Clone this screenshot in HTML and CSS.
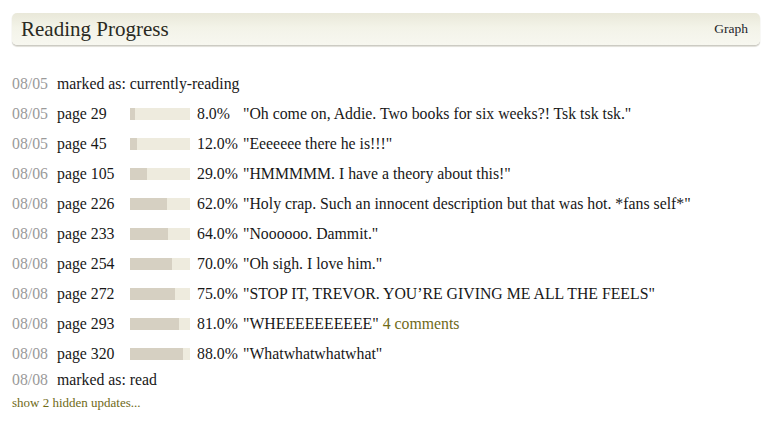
FILE: index.html
```html
<!DOCTYPE html>
<html>
<head>
<meta charset="utf-8">
<link rel="stylesheet" href="styles.css">
</head>
<body>
<div class="page">
  <div class="header">
    <h2 class="title">Reading Progress</h2>
    <a class="graph" href="#">Graph</a>
  </div>
  <div class="list">
    <div class="row status status-start"><span class="date">08/05</span><span class="label">marked as: currently-reading</span></div>
    <div class="row"><span class="date">08/05</span><span class="page-no">page 29</span><span class="bar"><span class="fill" style="width:8%"></span></span><span class="pct">8.0%</span><span class="quote">"Oh come on, Addie. Two books for six weeks?! Tsk tsk tsk."</span></div>
    <div class="row"><span class="date">08/05</span><span class="page-no">page 45</span><span class="bar"><span class="fill" style="width:12%"></span></span><span class="pct">12.0%</span><span class="quote">"Eeeeeee there he is!!!"</span></div>
    <div class="row"><span class="date">08/06</span><span class="page-no">page 105</span><span class="bar"><span class="fill" style="width:29%"></span></span><span class="pct">29.0%</span><span class="quote">"HMMMMM. I have a theory about this!"</span></div>
    <div class="row"><span class="date">08/08</span><span class="page-no">page 226</span><span class="bar"><span class="fill" style="width:62%"></span></span><span class="pct">62.0%</span><span class="quote">"Holy crap. Such an innocent description but that was hot. *fans self*"</span></div>
    <div class="row"><span class="date">08/08</span><span class="page-no">page 233</span><span class="bar"><span class="fill" style="width:64%"></span></span><span class="pct">64.0%</span><span class="quote">"Noooooo. Dammit."</span></div>
    <div class="row"><span class="date">08/08</span><span class="page-no">page 254</span><span class="bar"><span class="fill" style="width:70%"></span></span><span class="pct">70.0%</span><span class="quote">"Oh sigh. I love him."</span></div>
    <div class="row"><span class="date">08/08</span><span class="page-no">page 272</span><span class="bar"><span class="fill" style="width:75%"></span></span><span class="pct">75.0%</span><span class="quote">"STOP IT, TREVOR. YOU’RE GIVING ME ALL THE FEELS"</span></div>
    <div class="row"><span class="date">08/08</span><span class="page-no">page 293</span><span class="bar"><span class="fill" style="width:81%"></span></span><span class="pct">81.0%</span><span class="quote">"WHEEEEEEEEEE" <a class="link" href="#">4 comments</a></span></div>
    <div class="row"><span class="date">08/08</span><span class="page-no">page 320</span><span class="bar"><span class="fill" style="width:88%"></span></span><span class="pct">88.0%</span><span class="quote">"Whatwhatwhatwhat"</span></div>
    <div class="row status status-end"><span class="date">08/08</span><span class="label">marked as: read</span></div>
    <a class="more" href="#">show 2 hidden updates...</a>
  </div>
</div>
</body>
</html>
```

FILE: styles.css
```css
html, body {
  margin: 0;
  padding: 0;
  background: #ffffff;
}
body {
  font-family: "Liberation Serif", "DejaVu Serif", serif;
  color: #181818;
}
.page {
  padding: 13px 12px 0 12px;
  width: 748px;
}
.header {
  display: flex;
  align-items: center;
  justify-content: space-between;
  height: 32px;
  padding: 0 12px 0 9px;
  border-radius: 5px;
  background: linear-gradient(to bottom, #e9e8d9 0%, #f3f3e8 45%, #f7f7f0 100%);
  box-shadow: 0 1px 1px #c9c8c0, 0 2px 1px #e4e3dc;
}
.title {
  margin: 0;
  font-weight: normal;
  font-size: 21px;
  color: #2a2a22;
}
.graph {
  font-size: 13.5px;
  color: #1e1e2a;
  text-decoration: none;
}
.list {
  padding-top: 24px;
  font-size: 15.8px;
}
.row {
  display: flex;
  align-items: center;
  height: 30px;
  white-space: nowrap;
}
.row.status-start {
  height: 30px;
}
.row.status-end {
  height: 22px;
}
.date {
  color: #9a9a9a;
  width: 45px;
}
.page-no {
  width: 73px;
}
.bar {
  display: block;
  width: 60px;
  height: 12px;
  background: #eeebde;
}
.fill {
  display: block;
  height: 100%;
  background: #d6d0c2;
}
.pct {
  width: 46px;
  padding-left: 7px;
}
.link {
  color: #6f6a18;
  text-decoration: none;
}
.more {
  display: block;
  margin-top: 5px;
  line-height: 14px;
  font-size: 13px;
  color: #6f6a18;
  text-decoration: none;
}
```
